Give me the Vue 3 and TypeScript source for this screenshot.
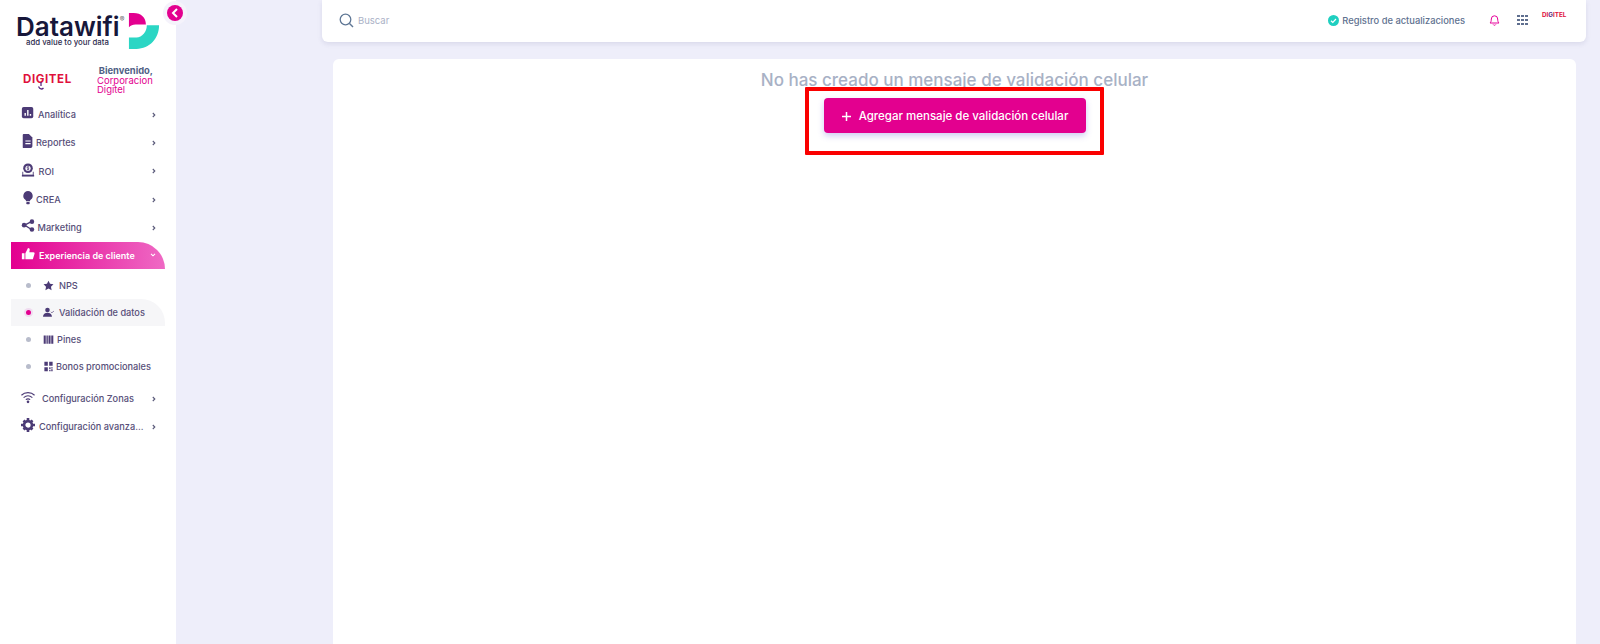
<script setup lang="ts">
interface Item { label: string; icon: string; gap: number }
const mainTop: Item[] = [
  { label: 'Analítica', icon: 'chart', gap: 3 },
  { label: 'Reportes', icon: 'doc', gap: 1 },
  { label: 'ROI', icon: 'roi', gap: 3.5 },
  { label: 'CREA', icon: 'bulb', gap: 1 },
  { label: 'Marketing', icon: 'share', gap: 2.5 },
]
const subs = [
  { label: 'NPS', icon: 'star', active: false, gap: 5 },
  { label: 'Validación de datos', icon: 'user', active: true, gap: 5 },
  { label: 'Pines', icon: 'bars', active: false, gap: 3 },
  { label: 'Bonos promocionales', icon: 'qr', active: false, gap: 2 },
]
const mainBottom: Item[] = [
  { label: 'Configuración Zonas', icon: 'wifi', gap: 7 },
  { label: 'Configuración avanza...', icon: 'gear', gap: 4 },
]
const grid = [0, 1, 2, 3, 4, 5, 6, 7, 8]
</script>

<template>
  <div class="page">
    <aside class="sidebar">
      <button class="collapse" aria-label="Contraer">
        <svg width="8" height="10" viewBox="0 0 8 10"><path d="M6 1 2 5l4 4" fill="none" stroke="#fff" stroke-width="2" /></svg>
      </button>
      <div class="brand">
        <div class="brand-text">
          <div class="brand-name">Datawifi<sup>®</sup></div>
          <div class="brand-tag">add value to your data</div>
        </div>
        <svg class="brand-mark" width="32" height="38" viewBox="0 0 34 40">
          <path d="M1 1h5c8 0 13 5 13 12H8C5 13 3 14 1 16Z" fill="#e3008f" />
          <path d="M20 14h13c0 14-10 25-24 25H1V27h8c6 0 11-6 11-13Z" fill="#2bd6c4" />
        </svg>
      </div>
      <div class="welcome">
        <div class="digitel">DI<span class="g">G<svg class="tail" width="8" height="8" viewBox="0 0 8 8"><path d="M4 0v4M1.500 4.500C3 7.500 5 7.500 6.500 6" fill="none" stroke="#5a2a82" stroke-width="1.300" /></svg></span>ITEL</div>
        <div class="hello">
          <strong>Bienvenido,</strong>
          <span>Corporacion Digitel</span>
        </div>
      </div>

      <nav class="menu">
        <a v-for="item in mainTop" :key="item.label" class="row">
          <svg class="ico" viewBox="0 0 16 16">
            <template v-if="item.icon === 'chart'">
              <rect x="1" y="1" width="13" height="13" rx="2" fill="#4c3b76" />
              <path d="M4 11V8h1.600v3Zm3 0V4.500h1.600V11Zm3 0V9h1.600v2Z" fill="#fff" />
            </template>
            <template v-else-if="item.icon === 'doc'">
              <path d="M3 0h6l4 4v10a2 2 0 0 1-2 2H3a1 1 0 0 1-1-1V1a1 1 0 0 1 1-1Z" fill="#4c3b76" />
              <path d="M5 8h6M5 11h6" stroke="#fff" stroke-width="1.300" />
            </template>
            <template v-else-if="item.icon === 'roi'">
              <circle cx="8" cy="6" r="5.500" fill="#4c3b76" />
              <circle cx="8" cy="6" r="3" fill="#fff" />
              <path d="M9.300 4.800C8.500 4 6.800 4.300 7 5.300c.2.900 2.300.5 2.200 1.500-.1.900-1.700 1-2.500.3M8 3.400v5.200" fill="none" stroke="#4c3b76" stroke-width="0.800" />
              <path d="M1 14.500h14" stroke="#4c3b76" stroke-width="2" />
              <path d="M2 10v4h12v-4" fill="none" stroke="#4c3b76" stroke-width="1" />
            </template>
            <template v-else-if="item.icon === 'bulb'">
              <path d="M8 0a5.500 5.500 0 0 0-3 10c.6.500.8 1 .8 1.600h4.400c0-.6.2-1.100.8-1.600A5.500 5.500 0 0 0 8 0Z" fill="#4c3b76" />
              <rect x="6" y="12.500" width="4" height="2.500" rx="1" fill="#4c3b76" />
            </template>
            <template v-else-if="item.icon === 'share'">
              <path d="M12 3 4 7l8 5" fill="none" stroke="#4c3b76" stroke-width="1.500" />
              <circle cx="12.500" cy="3" r="2.600" fill="#4c3b76" />
              <circle cx="3.500" cy="7" r="2.600" fill="#4c3b76" />
              <circle cx="12.500" cy="12" r="2.600" fill="#4c3b76" />
            </template>
          </svg>
          <span class="label" :style="{ marginLeft: item.gap + 'px' }">{{ item.label }}</span>
          <svg class="chev" width="4" height="6" viewBox="0 0 5 7"><path d="m1 1 2.500 2.500L1 6" fill="none" stroke="#5a5a7a" stroke-width="1.400" /></svg>
        </a>

        <a class="row open">
          <svg class="ico" viewBox="0 0 16 16">
            <path d="M1 7h3v7H1Zm4 0 3-6c1.500 0 2 1 2 2l-.5 3H14a1.500 1.500 0 0 1 1.400 2l-1.600 5a1 1 0 0 1-1 1H5Z" fill="#fff" />
          </svg>
          <span class="label" style="margin-left: 4px">Experiencia de cliente</span>
          <svg class="chev" width="6" height="4" viewBox="0 0 7 5"><path d="m1 1 2.500 2.500L6 1" fill="none" stroke="#fff" stroke-width="1.300" /></svg>
        </a>

        <div class="subs">
          <a v-for="s in subs" :key="s.label" class="sub" :class="{ active: s.active }">
            <span class="dot"></span>
            <svg class="sub-ico" viewBox="0 0 16 16" :style="{ marginRight: s.gap + 'px' }">
              <path v-if="s.icon === 'star'" d="m8 1 2.200 4.600 5 .7-3.600 3.500.9 5L8 12.400l-4.500 2.400.9-5L.8 6.300l5-.7Z" fill="#4c3b76" />
              <template v-else-if="s.icon === 'user'">
                <circle cx="6.500" cy="4.500" r="3.300" fill="#4c3b76" />
                <path d="M0 14c0-3.500 3-5.500 6.500-5.500S13 10.500 13 14Z" fill="#4c3b76" />
                <path d="m11.500 7 1.500 1.500 3-3" fill="none" stroke="#4c3b76" stroke-width="1" />
              </template>
              <path v-else-if="s.icon === 'bars'" d="M1 2h3v12H1Zm4 0h2v12H5Zm3 0h3v12H8Zm4 0h3v12h-3Z" fill="#4c3b76" />
              <path v-else d="M2 1h5v6H2Zm7 0h5v6H9ZM2 9h5v6H2Zm7 0h2v3H9Zm3 0h2v2h-2Zm-3 4h2v2H9Zm3-1h2v3h-2Z" fill="#4c3b76" />
            </svg>
            <span class="label">{{ s.label }}</span>
          </a>
        </div>

        <a v-for="item in mainBottom" :key="item.label" class="row">
          <svg class="ico" viewBox="0 0 16 16">
            <template v-if="item.icon === 'wifi'">
              <path d="M.5 6c4-4 11-4 15 0M3 8.700c3-2.600 7-2.600 10 0M5.500 11c1.500-1 3.500-1 5 0" fill="none" stroke="#4c3b76" stroke-width="1.300" />
              <circle cx="8" cy="13.500" r="1.500" fill="#4c3b76" />
            </template>
            <template v-else>
              <circle cx="8" cy="8" r="4.500" fill="none" stroke="#4c3b76" stroke-width="3" />
              <path d="M6.500 0h3v3h-3Zm0 13h3v3h-3ZM0 6.500h3v3H0Zm13 0h3v3h-3ZM1.800 3.900l2.100-2.100 2 2-2.100 2.100Zm8.300 8.300 2.100-2.100 2 2-2.100 2.100ZM1.800 12.100l2-2 2.100 2.100-2 2Zm8.300-8.300 2.100-2 2 2-2.100 2.100Z" fill="#4c3b76" />
            </template>
          </svg>
          <span class="label" :style="{ marginLeft: item.gap + 'px' }">{{ item.label }}</span>
          <svg class="chev" width="4" height="6" viewBox="0 0 5 7"><path d="m1 1 2.500 2.500L1 6" fill="none" stroke="#5a5a7a" stroke-width="1.400" /></svg>
        </a>
      </nav>
    </aside>

    <main class="main">
      <header class="topbar">
        <svg width="15" height="15" viewBox="0 0 15 15"><circle cx="6.500" cy="6.500" r="5.300" fill="none" stroke="#5f7795" stroke-width="1.300" /><path d="m10.500 10.500 3.500 3.500" stroke="#5f7795" stroke-width="1.400" /></svg>
        <span class="search">Buscar</span>
        <span class="spacer"></span>
        <svg width="11" height="11" viewBox="0 0 11 11"><circle cx="5.500" cy="5.500" r="5.500" fill="#1fcfc0" /><path d="m3 5.700 1.800 1.700L8 4" fill="none" stroke="#fff" stroke-width="1.200" /></svg>
        <span class="updates">Registro de actualizaciones</span>
        <svg class="bell" width="11" height="12" viewBox="0 0 11 12"><path d="M1 9c1-1 1.300-2 1.300-4a3.200 3.200 0 0 1 6.400 0c0 2 .3 3 1.300 4ZM4.200 10.500c.5 1 2.100 1 2.600 0" fill="none" stroke="#e6009a" stroke-width="1" /></svg>
        <div class="apps">
          <i v-for="n in grid" :key="n"></i>
        </div>
        <div class="mini-digitel">DI<span>G</span>ITEL</div>
      </header>

      <section class="content">
        <h1>No has creado un mensaje de validación celular</h1>
        <div class="cta-wrap">
          <button class="cta">
            <svg width="11" height="11" viewBox="0 0 11 11"><path d="M5.500 1v9M1 5.500h9" stroke="#fff" stroke-width="1.500" /></svg>
            Agregar mensaje de validación celular
          </button>
          <div class="highlight"></div>
        </div>
      </section>
    </main>
  </div>
</template>

<style>
html, body { margin: 0; background: #eeeefa; }
</style>

<style scoped>
.page {
  display: flex;
  height: 644px;
  overflow: hidden;
  background: #eeeefa;
  font-family: Inter, "Open Sans", "Liberation Sans", sans-serif;
}
.sidebar {
  position: relative;
  flex: 0 0 176px;
  background: #fff;
  box-sizing: border-box;
}
.collapse {
  position: absolute;
  left: 167px;
  top: 5px;
  width: 16px;
  height: 16px;
  padding: 0;
  border: 0;
  border-radius: 50%;
  background: #e3008f;
  box-shadow: 0 0 0 4px #f5f3fb;
  display: flex;
  align-items: center;
  justify-content: center;
}
.brand {
  display: flex;
  padding: 11px 0 0 16px;
  height: 49px;
}
.brand-text { width: 112px; padding-top: 3.500px; }
.brand-name {
  height: 23px;
  font-size: 26px;
  line-height: 23px;
  font-weight: 600;
  color: #17173a;
  white-space: nowrap;
}
.brand-name sup {
  font-size: 7px;
  line-height: 0;
  vertical-align: 14px;
  color: #666;
  font-weight: 400;
}
.brand-tag {
  margin: 0 0 0 10px;
  font-size: 7.800px;
  line-height: 9px;
  font-weight: 500;
  color: #2c2c4e;
  white-space: nowrap;
}
.brand-mark { margin-top: 1px; }
.welcome {
  display: flex;
  align-items: flex-start;
  margin-top: 6px;
  height: 34.500px;
}
.digitel {
  margin: 6px 0 0 23px;
  width: 74px;
  font-size: 11.500px;
  line-height: 14px;
  font-weight: 700;
  letter-spacing: 0.6px;
  color: #e0103c;
}
.g { position: relative; }
.tail { position: absolute; left: 1px; top: 10px; }
.hello {
  font-size: 9.500px;
  line-height: 8.500px;
  color: #e3008f;
  width: 56px;
  text-align: left;
}
.hello strong {
  display: block;
  color: #4f5f85;
  font-size: 9.400px;
  font-weight: 700;
  text-align: right;
  margin-bottom: 2px;
  line-height: 9px;
  white-space: nowrap;
}
.hello span { display: block; }
.menu { display: flex; flex-direction: column; }
.row {
  display: flex;
  align-items: center;
  height: 28.300px;
  box-sizing: border-box;
  margin-left: 11px;
  width: 154px;
  padding: 0 9px 0 10px;
  font-size: 9.200px;
  font-weight: 500;
  color: #564e78;
  white-space: nowrap;
}
.ico { width: 14px; height: 14px; flex: none; margin-top: -3px; }
.label { white-space: nowrap; }
.chev { margin-left: auto; }
.row.open {
  height: 27px;
  color: #fff;
  font-size: 9px;
  font-weight: 600;
  border-radius: 0 32px 0 0;
  background: linear-gradient(90deg, #e3008f, #ef69c4);
}
.subs {
  display: flex;
  flex-direction: column;
  padding: 3px 0 5px;
}
.sub {
  display: flex;
  align-items: center;
  height: 26.900px;
  margin-left: 11px;
  width: 154px;
  box-sizing: border-box;
  padding-left: 15px;
  font-size: 9.200px;
  font-weight: 500;
  color: #564e78;
  white-space: nowrap;
}
.sub.active {
  background: #f6f6f8;
  border-radius: 0 24px 0 0;
}
.dot {
  flex: none;
  width: 5px;
  height: 5px;
  border-radius: 50%;
  background: #b8bccb;
  margin-right: 12px;
}
.sub.active .dot {
  background: #e3008f;
  box-shadow: 0 0 0 2px #f0dbf0;
}
.sub-ico { width: 11px; height: 11px; flex: none; }
.main { flex: 1; min-width: 0; display: flex; flex-direction: column; }
.topbar {
  display: flex;
  align-items: center;
  height: 42px;
  margin: 0 14px 0 146px;
  padding: 0 18px 2px 17px;
  box-sizing: border-box;
  background: #fff;
  border-radius: 0 0 6px 6px;
  box-shadow: 0 2px 5px rgba(90, 90, 140, 0.14);
}
.search {
  margin-left: 4px;
  font-size: 9.500px;
  color: #aab1c6;
}
.spacer { flex: 1; }
.updates {
  margin-left: 3px;
  font-size: 9.350px;
  font-weight: 500;
  color: #60718f;
  white-space: nowrap;
}
.bell { margin-left: 24px; }
.apps {
  margin-left: 17px;
  width: 11px;
  display: grid;
  grid-template-columns: repeat(3, 2.500px);
  gap: 1.500px;
}
.apps i { width: 2.500px; height: 2.500px; background: #5f6f8f; }
.mini-digitel {
  align-self: flex-start;
  margin: 12px 0 0 14px;
  width: 26px;
  font-size: 6.300px;
  line-height: 6px;
  font-weight: 700;
  color: #e0103c;
}
.mini-digitel span { color: #5a2a82; }
.content {
  flex: 1;
  margin: 17px 24px 0 157px;
  background: #fff;
  border-radius: 6px 6px 0 0;
  text-align: center;
}
h1 {
  margin: 0;
  padding-top: 13px;
  font-size: 17px;
  line-height: 17px;
  font-weight: 500;
  color: #a8b1c5;
}
.cta-wrap {
  position: relative;
  width: 262px;
  margin: 9px auto 0;
}
.cta {
  display: flex;
  align-items: center;
  justify-content: center;
  gap: 7px;
  width: 262px;
  height: 35px;
  padding: 1px 0 0;
  border: 0;
  border-radius: 4px;
  background: #e3008f;
  color: #fff;
  font: 500 11.500px Inter, "Liberation Sans", sans-serif;
  box-shadow: 0 3px 6px rgba(100, 90, 220, 0.3);
}
.highlight {
  position: absolute;
  left: -19px;
  top: -11px;
  width: 299px;
  height: 68px;
  box-sizing: border-box;
  border: 4px solid #fa0000;
  border-radius: 1px;
  pointer-events: none;
}
</style>
